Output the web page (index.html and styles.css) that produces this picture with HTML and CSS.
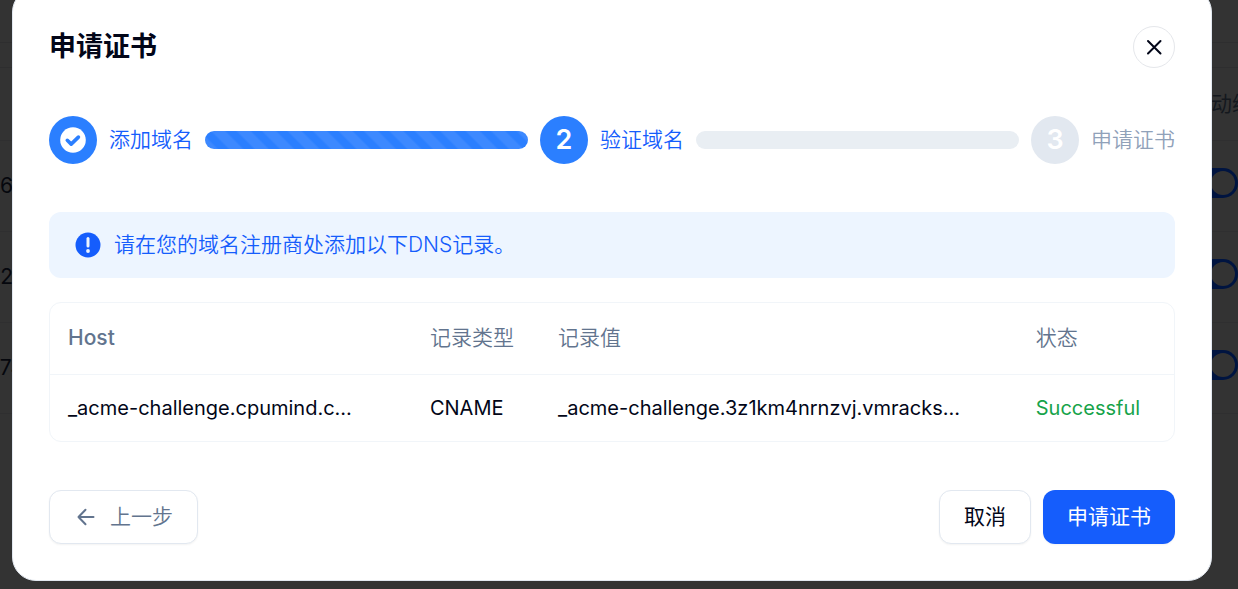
FILE: index.html
```html
<!DOCTYPE html>
<html lang="zh-CN">
<head>
  <meta charset="UTF-8" />
  <meta name="viewport" content="width=device-width, initial-scale=1.0" />
  <title>申请证书</title>
  <link rel="stylesheet" href="styles.css">
</head>
<body>

<!-- 证书列表 -->
<main class="page" inert>
  <div class="toolbar"></div>
  <div class="list-gap"></div>
  <div class="list-head"><span></span><span class="list-renew">自动续期</span></div>
  <div class="list-row"><span class="list-id">36</span><span class="switch"></span></div>
  <div class="list-row"><span class="list-id">2</span><span class="switch"></span></div>
  <div class="list-row"><span class="list-id list-id-wide">74</span><span class="switch"></span></div>
</main>

<!-- 弹窗 -->
<div class="overlay">
  <section class="modal" role="dialog" aria-modal="true" aria-labelledby="modalTitle">
    <header class="modal-header">
      <h1 id="modalTitle">申请证书</h1>
      <button type="button" class="close" aria-label="关闭">
        <svg width="24" height="24" viewBox="0 0 24 24" fill="none" stroke="currentColor" stroke-width="2" stroke-linecap="round">
          <path d="M6 6l12.500 12.500M18.500 6L6 18.500" />
        </svg>
      </button>
    </header>

    <div class="steps">
      <div class="step">
        <span class="step-icon">
          <svg width="26" height="26" viewBox="0 0 26 26">
            <circle cx="13" cy="13" r="12.800" fill="#fff" />
            <path d="M7.300 13.300l3.900 3.800 7.200-7" fill="none" stroke="#2b7fff" stroke-width="3.600" stroke-linecap="round" stroke-linejoin="round" />
          </svg>
        </span>
        <span class="step-label">添加域名</span>
      </div>
      <div class="step-bar step-bar-done"></div>
      <div class="step">
        <span class="step-icon">2</span>
        <span class="step-label">验证域名</span>
      </div>
      <div class="step-bar"></div>
      <div class="step step-pending">
        <span class="step-icon">3</span>
        <span class="step-label">申请证书</span>
      </div>
    </div>

    <div class="notice">
      <svg width="26" height="26" viewBox="0 0 26 26">
        <circle cx="13" cy="13" r="12.500" fill="#155dfc" />
        <path d="M13 6.500v7.500" stroke="#edf5ff" stroke-width="3" stroke-linecap="round" />
        <circle cx="13" cy="19" r="1.900" fill="#edf5ff" />
      </svg>
      <p>请在您的域名注册商处添加以下DNS记录。</p>
    </div>

    <div class="table-wrap">
      <table class="records">
        <thead>
          <tr>
            <th class="col-host">Host</th>
            <th class="col-type cn">记录类型</th>
            <th class="col-value cn">记录值</th>
            <th class="cn">状态</th>
          </tr>
        </thead>
        <tbody>
          <tr>
            <td>_acme-challenge.cpumind.c…</td>
            <td>CNAME</td>
            <td>_acme-challenge.3z1km4nrnzvj.vmracks…</td>
            <td class="success">Successful</td>
          </tr>
        </tbody>
      </table>
    </div>

    <footer class="modal-footer">
      <button type="button" class="btn btn-prev">
        <svg width="24" height="24" viewBox="0 0 24 24" fill="none" stroke="currentColor" stroke-width="2" stroke-linecap="round" stroke-linejoin="round">
          <path d="M19.500 12h-15M11.500 4.800L4.500 12l7 7.200" />
        </svg>
        上一步
      </button>
      <button type="button" class="btn">取消</button>
      <button type="button" class="btn btn-primary">申请证书</button>
    </footer>
  </section>
</div>

</body>
</html>
```

FILE: styles.css
```css
*, *::before, *::after {
  box-sizing: border-box;
}
body {
  margin: 0;
  background: #333;
  color: #020618;
  font-family: Inter, "Noto Sans CJK SC", sans-serif;
  font-size: 21px;
  line-height: 30px;
  overflow: hidden;
}

/* 背景列表 */
.page {
  color: #05070d;
  overflow: hidden;
}
.toolbar {
  height: 43px;
  border-bottom: 1px solid #2e2e2f;
}
.list-gap {
  height: 25px;
  border-bottom: 1px solid #2e2e2f;
}
.list-head,
.list-row {
  display: flex;
  align-items: center;
  justify-content: space-between;
  border-bottom: 1px solid #2f2f30;
}
.list-head {
  height: 73px;
  color: #14181e;
}
.list-renew {
  width: 48px;
  white-space: nowrap;
}
.list-row {
  height: 91px;
}
.list-id {
  display: flex;
  justify-content: flex-end;
  width: 13px;
}
.list-id-wide {
  width: 24px;
}
.switch {
  width: 54px;
  height: 30px;
  margin-bottom: 6px;
  padding: 3px;
  border-radius: 15px;
  background: #001440;
}
.switch::after {
  content: "";
  display: block;
  width: 24px;
  height: 24px;
  margin-left: auto;
  border-radius: 50%;
  background: #333;
}

/* 弹窗 */
.overlay {
  position: fixed;
  inset: 0;
  overflow: hidden;
}
.modal {
  margin: -12px 26px 0 12px;
  padding: 37px 36px 36px;
  border: 1px solid #e2e8f0;
  border-radius: 24px;
  background: #fff;
}
.modal-header {
  display: flex;
  align-items: center;
  justify-content: space-between;
}
.modal-header h1 {
  margin: 0;
  font-size: 27px;
  font-weight: 700;
  line-height: 42px;
}
.close {
  display: grid;
  place-items: center;
  width: 42px;
  height: 42px;
  padding: 0;
  border: 1px solid #e5e7eb;
  border-radius: 50%;
  background: #fff;
  color: #020618;
}

.steps {
  display: flex;
  align-items: center;
  gap: 12px;
  margin-top: 48px;
}
.step {
  display: flex;
  align-items: center;
  gap: 12px;
  color: #155dfc;
}
.step-icon {
  display: grid;
  place-items: center;
  width: 48px;
  height: 48px;
  border-radius: 50%;
  background: #2b7fff;
  color: #fff;
  font-size: 27px;
  font-weight: 600;
}
.step-label {
  font-weight: 350;
  white-space: nowrap;
}
.step-pending {
  color: #90a1b9;
}
.step-pending .step-icon {
  background: #e2e8f0;
}
.step-bar {
  flex: 1;
  height: 18px;
  border-radius: 9px;
  background: #e9eef3;
}
.step-bar-done {
  background: repeating-linear-gradient(45deg, #3d89ff 0 8px, #2b7fff 10px 16px, #3d89ff 18px);
}

.notice {
  display: flex;
  align-items: center;
  gap: 13px;
  margin: 48px 0 24px;
  padding: 18px 26px;
  border-radius: 12px;
  background: #edf5ff;
  color: #155dfc;
  font-weight: 350;
}
.notice p {
  margin: 0;
}

.table-wrap {
  border: 1px solid #f1f5f9;
  border-radius: 12px;
  overflow: hidden;
}
.records {
  width: 100%;
  table-layout: fixed;
  border-collapse: collapse;
  text-align: left;
}
.records th,
.records td {
  padding: 18px;
  font-weight: 400;
  white-space: nowrap;
}
.records td {
  font-size: 20px;
}
.records th {
  height: 71px;
  border-bottom: 1px solid #f1f5f9;
  color: #62748e;
  font-weight: 500;
}
.records th.cn {
  font-weight: 350;
}
.records .success {
  color: #16a34a;
}
.col-host {
  width: 32.2%;
}
.col-type {
  width: 11.4%;
}
.col-value {
  width: 42.5%;
}

.modal-footer {
  display: flex;
  gap: 12px;
  margin-top: 48px;
}
.btn {
  display: flex;
  align-items: center;
  gap: 12px;
  height: 54px;
  padding: 0 24px;
  border: 1px solid #e2e8f0;
  border-radius: 12px;
  background: #fff;
  color: #020618;
  font: inherit;
  box-shadow: 0 1px 2px rgba(0, 0, 0, 0.05);
}
.btn-prev {
  margin-right: auto;
  color: #62748e;
  font-weight: 350;
}
.btn-primary {
  border: 0;
  background: #155dfc;
  color: #fff;
}
```
